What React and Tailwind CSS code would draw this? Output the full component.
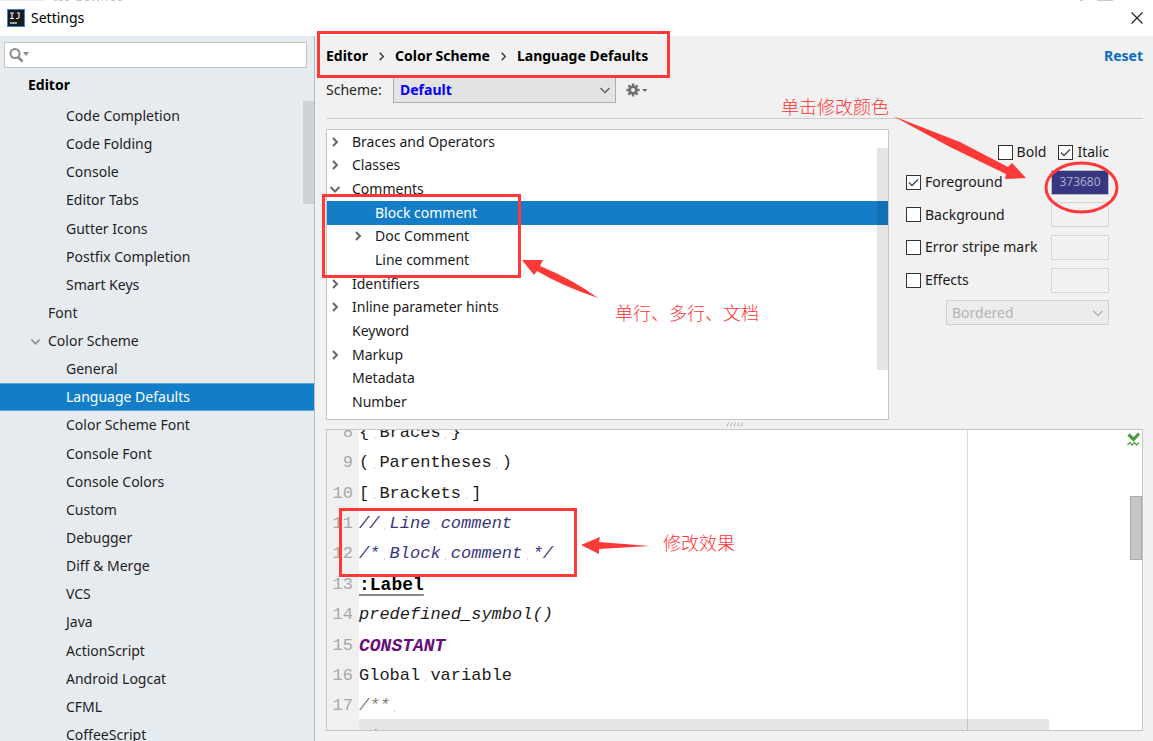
import React from 'react';

const sidebarRows = [
  ['Code Completion', 2], ['Code Folding', 2], ['Console', 2], ['Editor Tabs', 2],
  ['Gutter Icons', 2], ['Postfix Completion', 2], ['Smart Keys', 2], ['Font', 1],
  ['Color Scheme', 1, true], ['General', 2], ['Language Defaults', 2], ['Color Scheme Font', 2],
  ['Console Font', 2], ['Console Colors', 2], ['Custom', 2], ['Debugger', 2],
  ['Diff & Merge', 2], ['VCS', 2], ['Java', 2], ['ActionScript', 2],
  ['Android Logcat', 2], ['CFML', 2], ['CoffeeScript', 2],
];

const treeRows = [
  ['Braces and Operators', 'closed'], ['Classes', 'closed'], ['Comments', 'open'],
  ['Block comment', 'none', true], ['Doc Comment', 'closed', true], ['Line comment', 'none', true],
  ['Identifiers', 'closed'], ['Inline parameter hints', 'closed'], ['Keyword', 'none'],
  ['Markup', 'closed'], ['Metadata', 'none'], ['Number', 'none'],
];

const codeRows = [
  [8, '{ Braces }', 'text-[#1c1c1c]'],
  [9, '( Parentheses )', 'text-[#1c1c1c]'],
  [10, '[ Brackets ]', 'text-[#1c1c1c]'],
  [11, '// Line comment', 'italic text-[#373680]'],
  [12, '/* Block comment */', 'italic text-[#373680]'],
  [13, ':Label', 'text-lg font-bold text-black underline decoration-[#888] decoration-2 underline-offset-4'],
  [14, 'predefined_symbol()', 'italic text-[#1c1c1c]'],
  [15, 'CONSTANT', 'text-lg font-bold italic text-[#660e7a]'],
  [16, 'Global variable', 'text-[#1c1c1c]'],
  [17, '/** ', 'italic text-[#808080]'],
  [18, ' * Doc comment', 'italic text-[#808080]'],
];

function Chevron({ open, className }) {
  return (
    <svg viewBox="0 0 12 12" className={className} fill="none" stroke="currentColor" aria-hidden="true">
      <path d={open ? 'M1.5 4 6 8.500 10.500 4' : 'M4 2 8 6 4 10'} />
    </svg>
  );
}

function Check({ label, checked, className = '' }) {
  return (
    <label className={`flex items-center gap-1 whitespace-nowrap ${className}`}>
      <span className="relative block size-[15px]">
        <input type="checkbox" defaultChecked={checked} className="peer block size-[15px] appearance-none border border-[#333] bg-white" />
        <svg viewBox="0 0 15 15" className="pointer-events-none absolute inset-0 hidden peer-checked:block" fill="none" stroke="#444" strokeWidth="1.3" aria-hidden="true">
          <path d="M3 7.500 6 10.500 12 4.500" />
        </svg>
      </span>
      {label}
    </label>
  );
}

function CodeText({ text, className }) {
  return (
    <span className={`whitespace-pre ${className}`}>
      {text.split(/( )/).map((part, i) =>
        part === ' ' ? (
          <span key={i} className="bg-[linear-gradient(#d4d4d4,#d4d4d4)] bg-[length:1px_2px] bg-[position:50%_80%] bg-no-repeat"> </span>
        ) : (
          part
        )
      )}
    </span>
  );
}

function Sidebar() {
  return (
    <nav className="relative flex w-[315px] shrink-0 flex-col overflow-hidden border-r border-[#b5babd] bg-[#e6ebef] text-[#1f1f1f]">
      <label className="mt-[6px] mr-[7px] ml-[4px] flex h-[26px] shrink-0 items-center border border-[#c3c6c8] bg-white pl-1">
        <svg viewBox="0 0 22 16" className="h-4 w-[22px] shrink-0" fill="none" stroke="#8b8b8b" aria-hidden="true">
          <circle cx="6" cy="6.500" r="4.500" strokeWidth="2" />
          <path d="M9 10l4.500 4.500" strokeWidth="2.600" />
          <path d="M14 5h6l-3 4z" fill="#8b8b8b" stroke="none" />
        </svg>
        <input type="text" aria-label="Search settings" className="min-w-0 flex-1 bg-transparent outline-none" />
      </label>
      <div className="flex h-[34px] shrink-0 items-center pl-7 font-bold text-black">Editor</div>
      <div className="grid h-[647px] shrink-0 auto-rows-fr">
        {sidebarRows.map(([name, level, open]) => (
          <a
            key={name}
            href="#"
            className={`flex items-center ${name === 'Language Defaults' ? 'border-y border-[#5ba4d8] bg-[#137dc8] text-white' : ''} ${level === 2 ? 'pl-[66px]' : 'pl-[30px]'}`}
          >
            {level === 1 && (
              <span className="flex w-[18px] shrink-0">
                {open && <Chevron open className="size-[11px] stroke-2 text-[#8f9496]" />}
              </span>
            )}
            {name}
          </a>
        ))}
      </div>
      <div className="absolute top-[65px] right-0 h-[103px] w-[11px] bg-[#cdd2d6]" />
    </nav>
  );
}

function Tree() {
  return (
    <div className="relative w-[563px] shrink-0 border border-[#c6c6c6] bg-white pb-[5px] text-[#1a1a1a]">
      <ul className="grid h-[284px] auto-rows-fr">
        {treeRows.map(([name, state, nested]) => (
          <li
            key={name}
            className={`flex items-center ${nested ? 'pl-[25px]' : 'pl-[2px]'} ${name === 'Block comment' ? 'bg-[#137dc8] text-white' : ''}`}
          >
            <span className="flex w-[23px] shrink-0">
              {state !== 'none' && <Chevron open={state === 'open'} className="size-3 stroke-2 text-[#666]" />}
            </span>
            {name}
          </li>
        ))}
      </ul>
      <div className="absolute top-[18px] right-0 h-[222px] w-[11px] bg-black/10" />
    </div>
  );
}

function Swatch({ label, value }) {
  return value ? (
    <button aria-label={label} className="h-[25px] w-[58px] border border-[#b9bac4] bg-[#373680] text-xs text-[#a9a9c4]">{value}</button>
  ) : (
    <button aria-label={label} className="h-[25px] w-[58px] border border-[#d4d4d4]" />
  );
}

function Attributes() {
  const rows = [['Foreground', true, '373680'], ['Background'], ['Error stripe mark'], ['Effects']];
  return (
    <div className="flex w-[203px] flex-col pt-[11px] text-[#1a1a1a]">
      <div className="flex h-[24px] items-center justify-end gap-3">
        <Check label="Bold" />
        <Check label="Italic" checked />
      </div>
      <div className="mt-[2px] grid h-[163px] auto-rows-fr">
        {rows.map(([name, on, value]) => (
          <div key={name} className="flex items-center justify-between">
            <Check label={name} checked={on} />
            <Swatch label={`${name} color`} value={value} />
          </div>
        ))}
        <div className="relative flex items-center justify-end text-[#b4b4b4]">
          <select disabled aria-label="Effect type" className="h-[25px] w-[163px] appearance-none border border-[#d0d0d0] bg-[#ececec] pl-[5px] opacity-100">
            <option>Bordered</option>
          </select>
          <Chevron open className="pointer-events-none absolute right-[5px] size-3 stroke-[1.5]" />
        </div>
      </div>
    </div>
  );
}

function Editor() {
  return (
    <div className="relative min-h-0 flex-1 overflow-hidden border border-[#c6c6c6] bg-white font-['Liberation_Mono','Noto_Sans_CJK_SC',monospace] text-[17px]">
      <div className="absolute inset-y-0 left-0 w-8 bg-[#f0f0f0]" />
      <div className="absolute inset-y-0 left-[640px] w-px bg-[#d9d9d9]" />
      <div className="relative -mt-[12px] grid h-[334px] auto-rows-fr">
        {codeRows.map(([n, text, cls]) => (
          <div key={n} className="flex items-center">
            <span className="w-[26px] shrink-0 text-right text-[#a8a8a8]">{n}</span>
            <span className="w-[6px] shrink-0" />
            <CodeText text={text} className={cls} />
          </div>
        ))}
      </div>
      <div className="absolute bottom-0 left-8 h-[11px] w-[690px] bg-black/10" />
      <div className="absolute top-[66px] right-0 h-[64px] w-[12px] border border-[#aaa] bg-[#c6c6c6]" />
      <svg viewBox="0 0 13 14" className="absolute top-[2px] right-[2px] h-[14px] w-[13px]" fill="none" stroke="#4f9a45" aria-hidden="true">
        <path d="M1.500 2.500 6.500 7.500 12 1.500" strokeWidth="3.200" />
        <path d="M0.500 13 3 10.500 5 13 7.500 10.500 9.500 13 12 10.500" strokeWidth="1.200" />
      </svg>
    </div>
  );
}

function Annotations() {
  return (
    <div className="pointer-events-none absolute inset-0 font-['Noto_Sans_CJK_SC',sans-serif] text-[18px] leading-6 font-light text-[#ff3030]">
      <svg className="absolute top-0 left-0 h-[741px] w-[1153px]" fill="none" aria-hidden="true">
        <g stroke="#ff3838" strokeWidth="3">
          <rect x="318.500" y="32.500" width="350" height="44" />
          <rect x="323.500" y="195.500" width="196" height="81" />
          <rect x="340.500" y="509.500" width="235" height="66" />
          <ellipse cx="1081.500" cy="187.500" rx="35.500" ry="24.500" />
        </g>
        <g fill="#ff3838">
          <path d="M893 116 960 142 1008 167 1012 163 1026 178 1005 179 1006 174 950 147Z" />
          <path d="M522 260 543 260 540 266Q572 279 598 298Q562 286 537 271L534 275Z" />
          <path d="M581 545 600 537 599 542 650 546 599 549 599 554Z" />
        </g>
      </svg>
      <span className="absolute top-[94px] left-[781px] whitespace-nowrap">单击修改颜色</span>
      <span className="absolute top-[300px] left-[615px] whitespace-nowrap">单行、多行、文档</span>
      <span className="absolute top-[530px] left-[663px] whitespace-nowrap">修改效果</span>
    </div>
  );
}

function BackdropEdge() {
  return (
    <svg className="absolute top-0 left-0 h-[2px] w-full" fill="none" strokeWidth="1" aria-hidden="true">
      <path d="M0 0.500H45" stroke="#ececec" />
      <path d="M54 0.500h3M59 0.500h4M65 0.500h4M76 0.500h6M85 0.500h4M92 0.500h2M97 0.500h2M102 0.500h1M106 0.500h1M111 0.500h4M118 0.500h4M1080 0.500h3M1097 0.500h16" stroke="#c9c9c9" />
    </svg>
  );
}

export default function App() {
  return (
    <div className="relative flex h-screen flex-col overflow-hidden bg-[#f1f1f1] font-['Noto_Sans','Noto_Sans_CJK_SC',sans-serif] text-sm">
      <header className="flex h-9 shrink-0 items-center bg-white pr-[10px] pl-[7px]">
        <svg viewBox="0 0 18 18" className="size-[18px]" aria-hidden="true">
          <rect x="0.500" y="0.500" width="17" height="17" fill="#1b1b1b" stroke="#2f86e0" />
          <path d="M3 4h4M5 4v5.500M3 9.500h4M10 4h3M12 4v4Q12 9.500 10.500 9.500H9" fill="none" stroke="#e8e8e8" strokeWidth="1.200" />
          <path d="M3 14h7" stroke="#fff" strokeWidth="1.200" />
        </svg>
        <h1 className="ml-[6px] flex-1 text-black">Settings</h1>
        <button aria-label="Close">
          <svg viewBox="0 0 12 12" className="size-3" fill="none" stroke="#222" strokeWidth="1.200" aria-hidden="true">
            <path d="M0.500 0.500 11.500 11.500M11.500 0.500 0.500 11.500" />
          </svg>
        </button>
      </header>
      <div className="flex min-h-0 flex-1">
        <Sidebar />
        <main className="flex min-w-0 flex-1 flex-col pr-[10px] pb-[10px] pl-[11px]">
          <div className="flex h-[40px] shrink-0 items-center justify-between font-bold text-black">
            <div className="flex items-center">
              <span>Editor</span>
              <Chevron className="mx-2 size-[11px] stroke-[1.5] text-[#333]" />
              <span>Color Scheme</span>
              <Chevron className="mx-2 size-[11px] stroke-[1.5] text-[#333]" />
              <span>Language Defaults</span>
            </div>
            <a href="#" className="text-[#0a6cc4]">Reset</a>
          </div>
          <div className="flex h-[28px] shrink-0 items-center">
            <label htmlFor="scheme" className="w-[67px] text-[#1f1f1f]">Scheme:</label>
            <div className="relative flex items-center">
              <select id="scheme" className="h-[26px] w-[223px] appearance-none border border-[#adadad] bg-[#e3e3e3] pl-[6px] font-bold text-[#0000ff]">
                <option>Default</option>
              </select>
              <Chevron open className="pointer-events-none absolute right-[5px] size-3 stroke-[1.5] text-[#666]" />
            </div>
            <button aria-label="Scheme actions" className="ml-[10px]">
              <svg viewBox="0 0 22 14" className="h-[14px] w-[22px]" fill="none" stroke="#6e6e6e" aria-hidden="true">
                <circle cx="7" cy="7" r="3.300" strokeWidth="2.600" />
                <path d="M7 0.500v3M7 10.500v3M0.500 7h3M10.500 7h3M2.400 2.400l2 2M9.600 9.600l2 2M11.600 2.400l-2 2M2.400 11.600l2-2" strokeWidth="2.400" />
                <path d="M16 6h5.500l-2.750 3z" fill="#6e6e6e" stroke="none" />
              </svg>
            </button>
          </div>
          <div className="mt-[14px] mb-[10px] h-px shrink-0 bg-[#cdcdcd]" />
          <div className="flex shrink-0 gap-[17px]">
            <Tree />
            <Attributes />
          </div>
          <div className="flex h-[9px] shrink-0 items-center justify-center">
            <svg viewBox="0 0 17 5" className="h-[5px] w-[17px]" stroke="#b0b0b0" aria-hidden="true">
              <path d="M1 4.500 2.500 0.500M4.500 4.500 6 0.500M8 4.500 9.500 0.500M11.500 4.500 13 0.500M15 4.500 16.500 0.500" />
            </svg>
          </div>
          <Editor />
        </main>
      </div>
      <BackdropEdge />
      <Annotations />
    </div>
  );
}
